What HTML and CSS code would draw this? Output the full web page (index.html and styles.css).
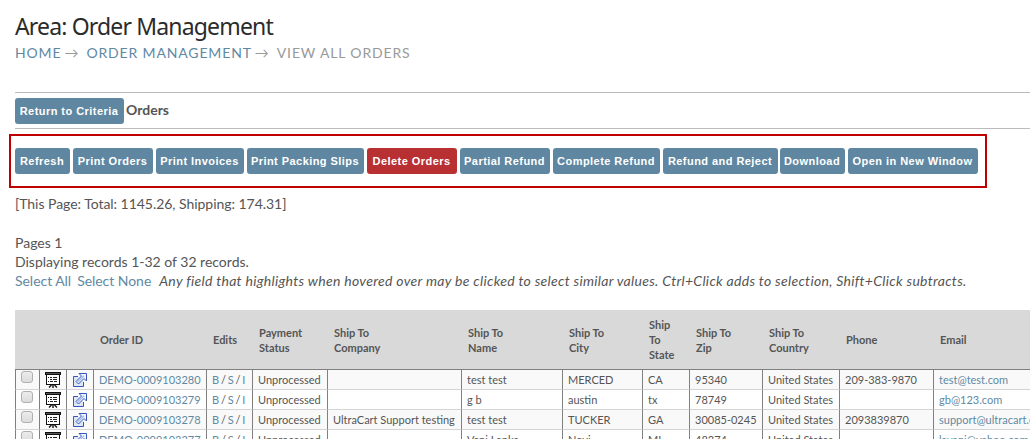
FILE: index.html
```html
<!DOCTYPE html>
<html lang="en">
<head>
    <meta charset="UTF-8">
    <title>Order Management</title>
    <link rel="stylesheet" href="styles.css">
</head>
<body>
    <svg class="symbols" width="0" height="0">
        <symbol id="board" viewBox="0 0 16 16">
            <path d="M0 0h16v3H0z" fill="#111"/>
            <path d="M1 1.5h14" stroke="#555"/>
            <path d="M1.5 3v9.5h13V3" fill="#fff" stroke="#111"/>
            <path d="M1 12.5h14" stroke="#111"/>
            <path d="M3 5.5h1M5 5.5h2M8 5.5h4M5 7.5h2M8 7.5h4M3 9.5h1M5 9.5h3M9 9.5h3" stroke="#222"/>
            <path d="M8 13v3M6.5 13L4 15.5M9.5 13l2.5 2.5" stroke="#111" stroke-width="1.4"/>
        </symbol>
        <symbol id="popout" viewBox="0 0 14 14">
            <path d="M5 3.5H.5v10h10V9" fill="#dfe7f6" stroke="#3557bd"/>
            <path d="M6 .5h7.5V8L11 5.5 5.5 11 3 8.5 8.5 3z" fill="#f1f5fd" stroke="#3557bd"/>
            <path d="M4.8 9L11 2.8" stroke="#a9bce9" stroke-width="1.5"/>
        </symbol>
    </svg>

    <h1>Area: Order Management</h1>
    <div class="breadcrumb">
        <a>HOME</a><span class="arrow">→</span><a>ORDER MANAGEMENT</a><span class="arrow">→</span><span>VIEW ALL ORDERS</span>
    </div>

    <div class="title-bar">
        <button class="btn return">Return to Criteria</button>
        <strong>Orders</strong>
    </div>

    <div class="actions">
        <button class="btn refresh">Refresh</button>
        <button class="btn orders">Print Orders</button>
        <button class="btn invoices">Print Invoices</button>
        <button class="btn slips">Print Packing Slips</button>
        <button class="btn delete">Delete Orders</button>
        <button class="btn partial">Partial Refund</button>
        <button class="btn complete">Complete Refund</button>
        <button class="btn reject">Refund and Reject</button>
        <button class="btn download">Download</button>
        <button class="btn window">Open in New Window</button>
    </div>

    <div class="totals">[This Page: Total: 1145.26, Shipping: 174.31]</div>
    <div class="paging">
        <div>Pages 1</div>
        <div>Displaying records 1-32 of 32 records.</div>
        <div class="select-row"><a>Select All</a><a>Select None</a><em>Any field that highlights when hovered over may be clicked to select similar values. Ctrl+Click adds to selection, Shift+Click subtracts.</em></div>
    </div>

    <table>
        <colgroup>
            <col class="c-check"><col class="c-icon"><col class="c-icon"><col class="c-id"><col class="c-edits"><col class="c-status"><col class="c-company"><col class="c-name"><col class="c-city"><col class="c-state"><col class="c-zip"><col class="c-country"><col class="c-phone"><col class="c-email">
        </colgroup>
        <thead>
            <tr>
                <th></th><th></th><th></th>
                <th>Order ID</th>
                <th>Edits</th>
                <th>Payment<br>Status</th>
                <th>Ship To<br>Company</th>
                <th>Ship To<br>Name</th>
                <th>Ship To<br>City</th>
                <th>Ship<br>To<br>State</th>
                <th>Ship To<br>Zip</th>
                <th>Ship To<br>Country</th>
                <th>Phone</th>
                <th>Email</th>
            </tr>
        </thead>
        <tbody>
            <tr>
                <td><span class="check"></span></td>
                <td><svg class="board"><use href="#board"/></svg></td>
                <td><svg class="popout"><use href="#popout"/></svg></td>
                <td><a>DEMO-0009103280</a></td>
                <td class="edits"><a>B</a> / <a>S</a> / <a>I</a></td>
                <td>Unprocessed</td><td></td><td>test test</td><td>MERCED</td><td>CA</td><td>95340</td><td>United States</td><td>209-383-9870</td>
                <td><a>test@test.com</a></td>
            </tr>
            <tr>
                <td><span class="check"></span></td>
                <td><svg class="board"><use href="#board"/></svg></td>
                <td><svg class="popout"><use href="#popout"/></svg></td>
                <td><a>DEMO-0009103279</a></td>
                <td class="edits"><a>B</a> / <a>S</a> / <a>I</a></td>
                <td>Unprocessed</td><td></td><td>g b</td><td>austin</td><td>tx</td><td>78749</td><td>United States</td><td></td>
                <td><a>gb@123.com</a></td>
            </tr>
            <tr>
                <td><span class="check"></span></td>
                <td><svg class="board"><use href="#board"/></svg></td>
                <td><svg class="popout"><use href="#popout"/></svg></td>
                <td><a>DEMO-0009103278</a></td>
                <td class="edits"><a>B</a> / <a>S</a> / <a>I</a></td>
                <td>Unprocessed</td><td>UltraCart Support testing</td><td>test test</td><td>TUCKER</td><td>GA</td><td>30085-0245</td><td>United States</td><td>2093839870</td>
                <td><a>support@ultracart.com</a></td>
            </tr>
            <tr>
                <td><span class="check"></span></td>
                <td><svg class="board"><use href="#board"/></svg></td>
                <td><svg class="popout"><use href="#popout"/></svg></td>
                <td><a>DEMO-0009103277</a></td>
                <td class="edits"><a>B</a> / <a>S</a> / <a>I</a></td>
                <td>Unprocessed</td><td></td><td>Vani Lanka</td><td>Novi</td><td>MI</td><td>48374</td><td>United States</td><td></td>
                <td><a>lavani@yahoo.com</a></td>
            </tr>
        </tbody>
    </table>
</body>
</html>
```
FILE: styles.css
```css
* {
    box-sizing: border-box;
}
body {
    margin: 0;
    padding: 11px 0 0 15px;
    height: 439px;
    overflow: hidden;
    background-color: #fff;
    color: #555;
    font-family: Lato, sans-serif;
    font-size: 14px;
    line-height: 19px;
}
.symbols {
    display: block;
}
a {
    color: #5f89a3;
}
h1 {
    margin: 0;
    height: 31px;
    color: #2b2b2b;
    font-family: "Noto Sans", sans-serif;
    font-size: 23px;
    font-weight: normal;
    letter-spacing: -0.84px;
    line-height: 30px;
}
.breadcrumb {
    display: flex;
    height: 50px;
    color: #999;
    letter-spacing: 0.85px;
    line-height: 22px;
    white-space: nowrap;
}
.arrow {
    width: 25px;
    padding-left: 3px;
}
.title-bar {
    display: flex;
    align-items: center;
    gap: 2px;
    height: 37px;
    border-top: 1px solid #bbb;
    border-bottom: 1px solid #bbb;
}
.title-bar strong {
    padding-bottom: 2px;
}
.btn {
    flex: none;
    height: 26px;
    padding: 0 1px 0 0;
    border: none;
    border-radius: 3px;
    background-color: #5f87a1;
    color: #fff;
    font-family: "Liberation Sans", Arial, sans-serif;
    font-size: 11px;
    font-weight: bold;
    letter-spacing: 0.45px;
    white-space: nowrap;
}
.return { width: 109px; }
.refresh { width: 55px; }
.orders { width: 80px; }
.invoices { width: 88px; }
.slips { width: 117px; }
.delete { width: 90px; background-color: #b93033; }
.partial { width: 90px; }
.complete { width: 107px; }
.reject { width: 115px; }
.download { width: 65px; margin-left: -1px; }
.window { width: 130px; }
.actions {
    display: flex;
    align-items: center;
    gap: 3px;
    width: 978px;
    height: 54px;
    margin: 5px 0 0 -6px;
    padding-left: 4px;
    border: 2px solid #bf0000;
}
.totals {
    height: 45px;
    padding-top: 6px;
    letter-spacing: -0.04px;
}
.select-row {
    display: flex;
    gap: 6px;
    letter-spacing: -0.04px;
    white-space: nowrap;
}
.select-row em {
    margin-left: 2px;
    letter-spacing: 0.305px;
}
table {
    width: 1015px;
    margin-top: 20px;
    table-layout: fixed;
    border-collapse: separate;
    border-spacing: 0;
    font-size: 11px;
}
.c-check { width: 24px; }
.c-icon { width: 27px; }
.c-id { width: 113px; }
.c-edits { width: 46px; }
.c-status { width: 75px; }
.c-company { width: 134px; }
.c-name { width: 101px; }
.c-city { width: 80px; }
.c-state { width: 47px; }
.c-zip { width: 73px; }
.c-country { width: 77px; }
.c-phone { width: 94px; }
.c-email { width: 97px; }
th {
    height: 60px;
    padding: 0 0 0 7px;
    border-bottom: 1px solid #808080;
    background-color: #d9d9d9;
    font-weight: bold;
    line-height: 15px;
    text-align: left;
}
td {
    height: 20px;
    padding: 0 0 0 5px;
    border-left: 1px solid #808080;
    border-bottom: 1px solid #d4d4d4;
    line-height: 19px;
    overflow: hidden;
    white-space: nowrap;
}
.edits {
    word-spacing: -1px;
}
tbody tr:nth-child(odd) {
    background-color: #f9f9f9;
}
td svg {
    display: block;
}
.board {
    width: 16px;
    height: 16px;
}
.popout {
    width: 14px;
    height: 14px;
    margin-left: 1px;
}
.check {
    display: block;
    width: 12px;
    height: 12px;
    margin-bottom: 5px;
    border: 1px solid #b0b0b0;
    border-radius: 3px;
    background: linear-gradient(#ececec, #dcdcdc);
}
```
